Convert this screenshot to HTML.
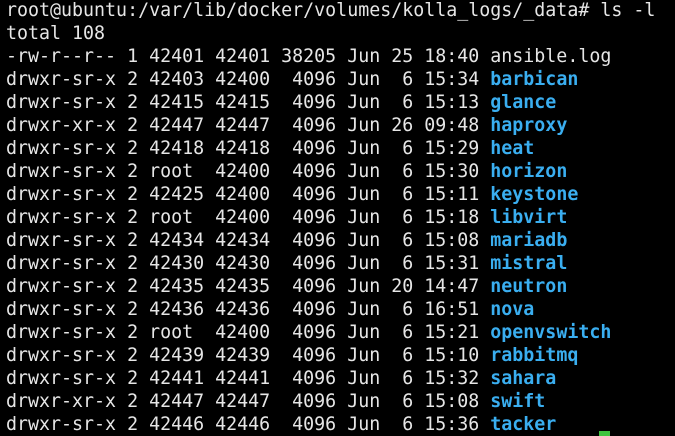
<!DOCTYPE html>
<html><head><style>
html,body{margin:0;padding:0;background:#000;width:675px;height:436px;overflow:hidden}
pre{margin:0;position:absolute;left:6px;top:-1px;font-family:"DejaVu Sans Mono","Liberation Mono",monospace;font-size:18.3px;line-height:23px;color:#e6e6e6;white-space:pre}
b{color:#3aaef0;font-weight:bold}
.cur{position:absolute;left:599px;top:431px;width:11px;height:5px;background:#3ec43e}
</style></head><body>
<pre>root@ubuntu:/var/lib/docker/volumes/kolla_logs/_data# ls -l
total 108
-rw-r--r-- 1 42401 42401 38205 Jun 25 18:40 ansible.log
drwxr-sr-x 2 42403 42400  4096 Jun  6 15:34 <b>barbican</b>
drwxr-sr-x 2 42415 42415  4096 Jun  6 15:13 <b>glance</b>
drwxr-xr-x 2 42447 42447  4096 Jun 26 09:48 <b>haproxy</b>
drwxr-sr-x 2 42418 42418  4096 Jun  6 15:29 <b>heat</b>
drwxr-sr-x 2 root  42400  4096 Jun  6 15:30 <b>horizon</b>
drwxr-sr-x 2 42425 42400  4096 Jun  6 15:11 <b>keystone</b>
drwxr-sr-x 2 root  42400  4096 Jun  6 15:18 <b>libvirt</b>
drwxr-sr-x 2 42434 42434  4096 Jun  6 15:08 <b>mariadb</b>
drwxr-sr-x 2 42430 42430  4096 Jun  6 15:31 <b>mistral</b>
drwxr-sr-x 2 42435 42435  4096 Jun 20 14:47 <b>neutron</b>
drwxr-sr-x 2 42436 42436  4096 Jun  6 16:51 <b>nova</b>
drwxr-sr-x 2 root  42400  4096 Jun  6 15:21 <b>openvswitch</b>
drwxr-sr-x 2 42439 42439  4096 Jun  6 15:10 <b>rabbitmq</b>
drwxr-sr-x 2 42441 42441  4096 Jun  6 15:32 <b>sahara</b>
drwxr-xr-x 2 42447 42447  4096 Jun  6 15:08 <b>swift</b>
drwxr-sr-x 2 42446 42446  4096 Jun  6 15:36 <b>tacker</b></pre>
<div class="cur"></div>
</body></html>
